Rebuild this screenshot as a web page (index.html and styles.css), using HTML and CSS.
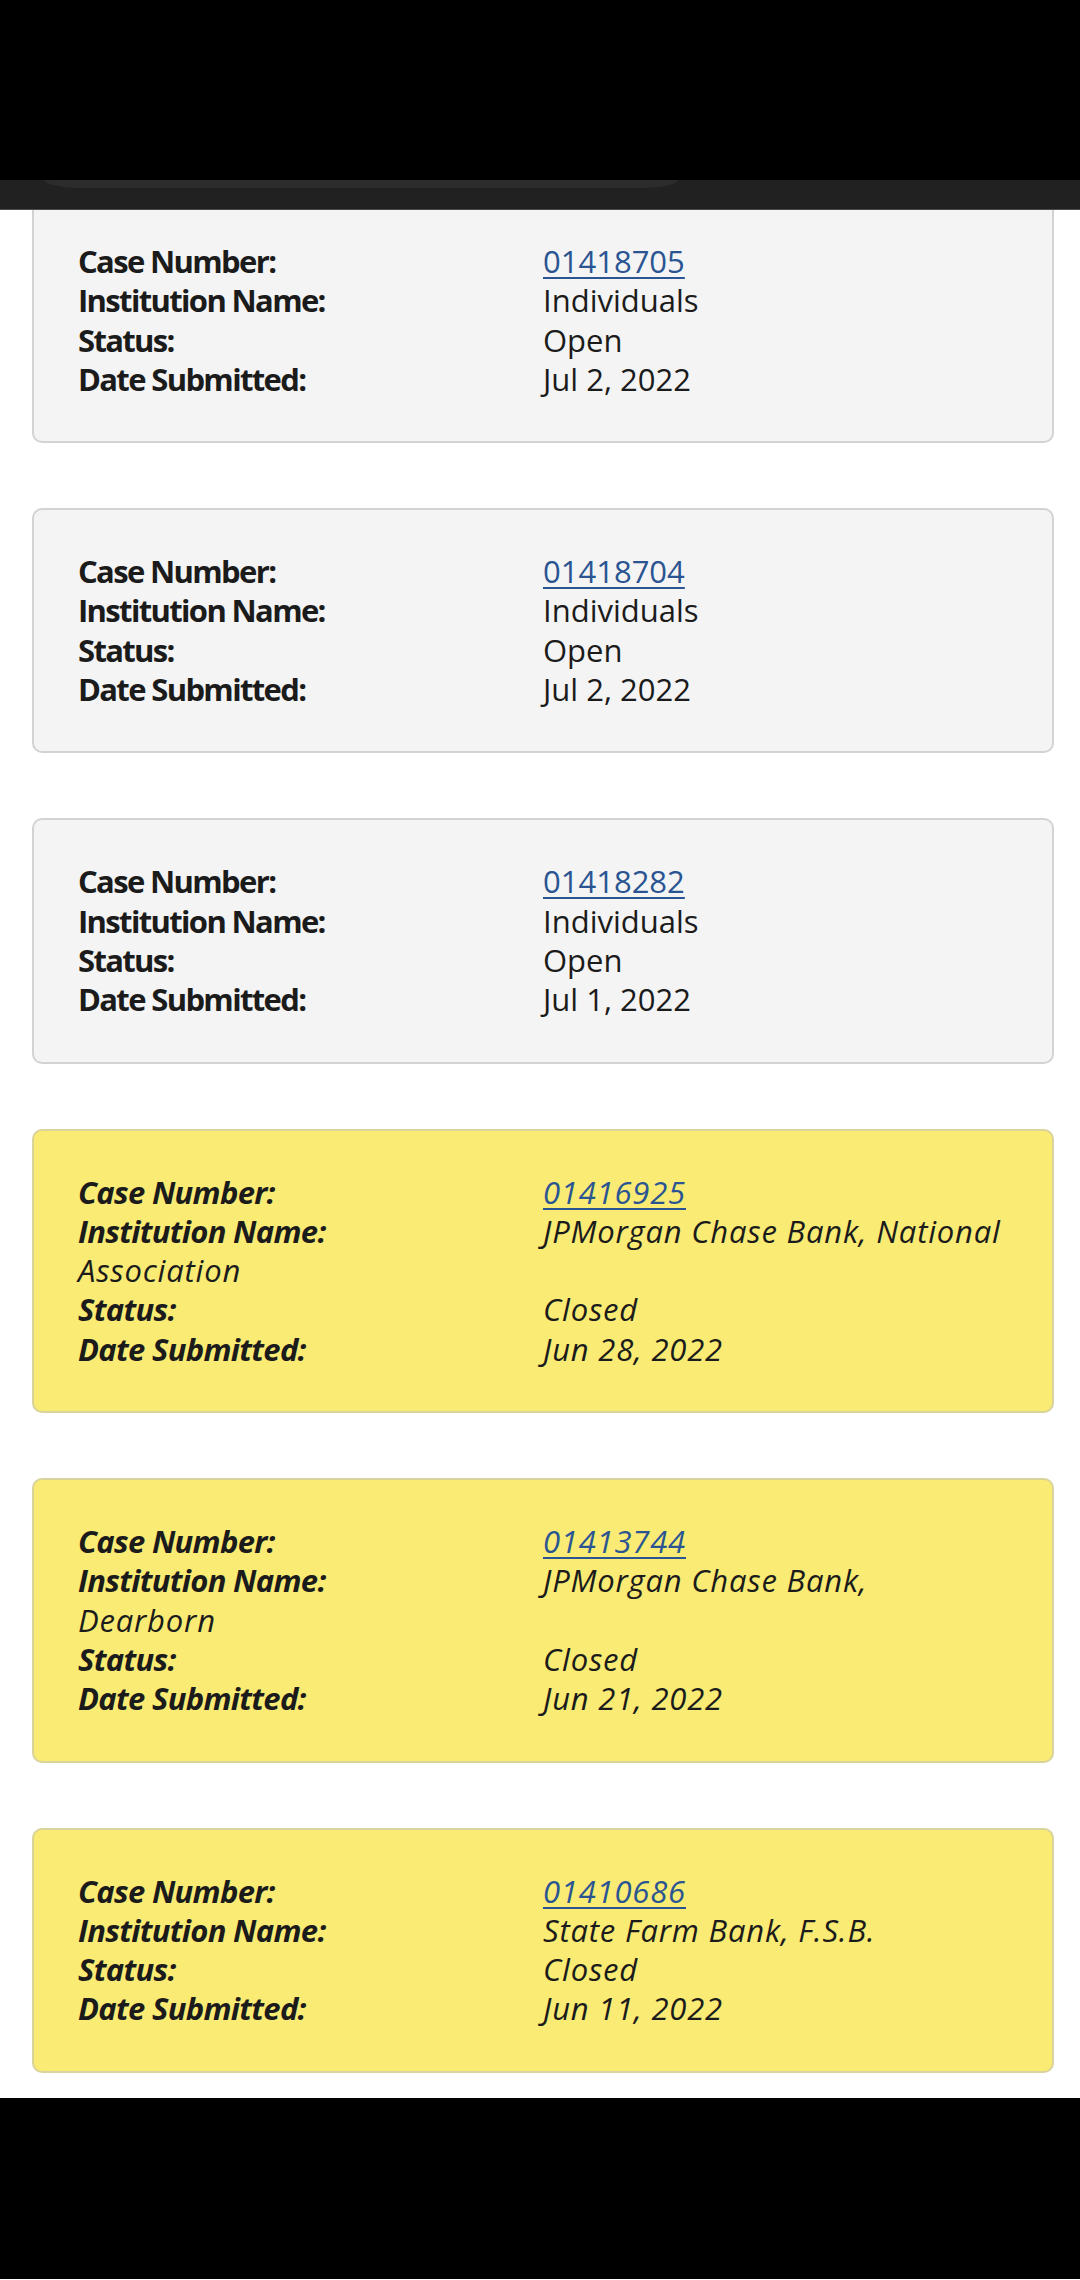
FILE: index.html
```html
<!DOCTYPE html>
<html lang="en">
<head>
<meta charset="utf-8">
<title>Cases</title>
<link rel="stylesheet" href="styles.css">
</head>
<body>
<div class="statusbar"></div>
<div class="toolbar"><div class="urlpill"></div></div>
<main class="list">
  <section class="card cut">
    <div class="row"><span class="label">Case Number:</span><a class="case" href="#">01418705</a></div>
    <div class="row"><span class="label">Institution Name:</span>Individuals</div>
    <div class="row"><span class="label">Status:</span>Open</div>
    <div class="row"><span class="label">Date Submitted:</span>Jul 2, 2022</div>
  </section>
  <section class="card">
    <div class="row"><span class="label">Case Number:</span><a class="case" href="#">01418704</a></div>
    <div class="row"><span class="label">Institution Name:</span>Individuals</div>
    <div class="row"><span class="label">Status:</span>Open</div>
    <div class="row"><span class="label">Date Submitted:</span>Jul 2, 2022</div>
  </section>
  <section class="card">
    <div class="row"><span class="label">Case Number:</span><a class="case" href="#">01418282</a></div>
    <div class="row"><span class="label">Institution Name:</span>Individuals</div>
    <div class="row"><span class="label">Status:</span>Open</div>
    <div class="row"><span class="label">Date Submitted:</span>Jul 1, 2022</div>
  </section>
  <section class="card closed">
    <div class="row"><span class="label">Case Number:</span><a class="case" href="#">01416925</a></div>
    <div class="row"><span class="label">Institution Name:</span>JPMorgan Chase Bank, National Association</div>
    <div class="row"><span class="label">Status:</span>Closed</div>
    <div class="row"><span class="label">Date Submitted:</span>Jun 28, 2022</div>
  </section>
  <section class="card closed">
    <div class="row"><span class="label">Case Number:</span><a class="case" href="#">01413744</a></div>
    <div class="row"><span class="label">Institution Name:</span>JPMorgan Chase Bank, Dearborn</div>
    <div class="row"><span class="label">Status:</span>Closed</div>
    <div class="row"><span class="label">Date Submitted:</span>Jun 21, 2022</div>
  </section>
  <section class="card closed">
    <div class="row"><span class="label">Case Number:</span><a class="case" href="#">01410686</a></div>
    <div class="row"><span class="label">Institution Name:</span>State Farm Bank, F.S.B.</div>
    <div class="row"><span class="label">Status:</span>Closed</div>
    <div class="row"><span class="label">Date Submitted:</span>Jun 11, 2022</div>
  </section>
</main>
<div class="navbar"></div>
</body>
</html>
```
FILE: styles.css
```css
* { box-sizing: border-box; }
html, body {
  margin: 0;
  padding: 0;
  background: #ffffff;
}
body {
  width: 1080px;
  height: 2280px;
  overflow: hidden;
  font-family: "Open Sans", "Noto Sans", sans-serif;
  font-size: 31px;
  line-height: 39.3px;
  color: #1b1b1b;
}
.statusbar {
  height: 180px;
  background: #000;
}
.toolbar {
  height: 30px;
  background: #212121;
  border-bottom: 1px solid #4a4a4a;
  padding-left: 44px;
}
.urlpill {
  width: 634px;
  height: 8px;
  background: #2c2c2c;
  border-radius: 0 0 40px 40px / 0 0 8px 8px;
}
.list {
  display: flex;
  flex-direction: column;
  gap: 65px;
  padding: 0 26px 25px 32px;
}
.card {
  background: #f4f4f4;
  border: 2px solid #d3d3d3;
  border-radius: 10px;
  padding: 42px 48px 42px 44px;
}
.card.cut {
  border-top: 0;
  border-radius: 0 0 10px 10px;
  padding-top: 32px;
}
.card.closed {
  background: #f9eb73;
  border-color: #d9d39c;
  font-style: italic;
  letter-spacing: 0.8px;
}
.row {
  margin: 0;
}
.label {
  display: inline-block;
  width: 465px;
  font-weight: 700;
  letter-spacing: -1.65px;
}
.card.closed .label {
  letter-spacing: -0.7px;
}
.case {
  color: #2a5592;
  text-decoration: underline;
  text-decoration-thickness: 2px;
  text-underline-offset: 4px;
}
.navbar {
  height: 181px;
  background: #000;
}
```
